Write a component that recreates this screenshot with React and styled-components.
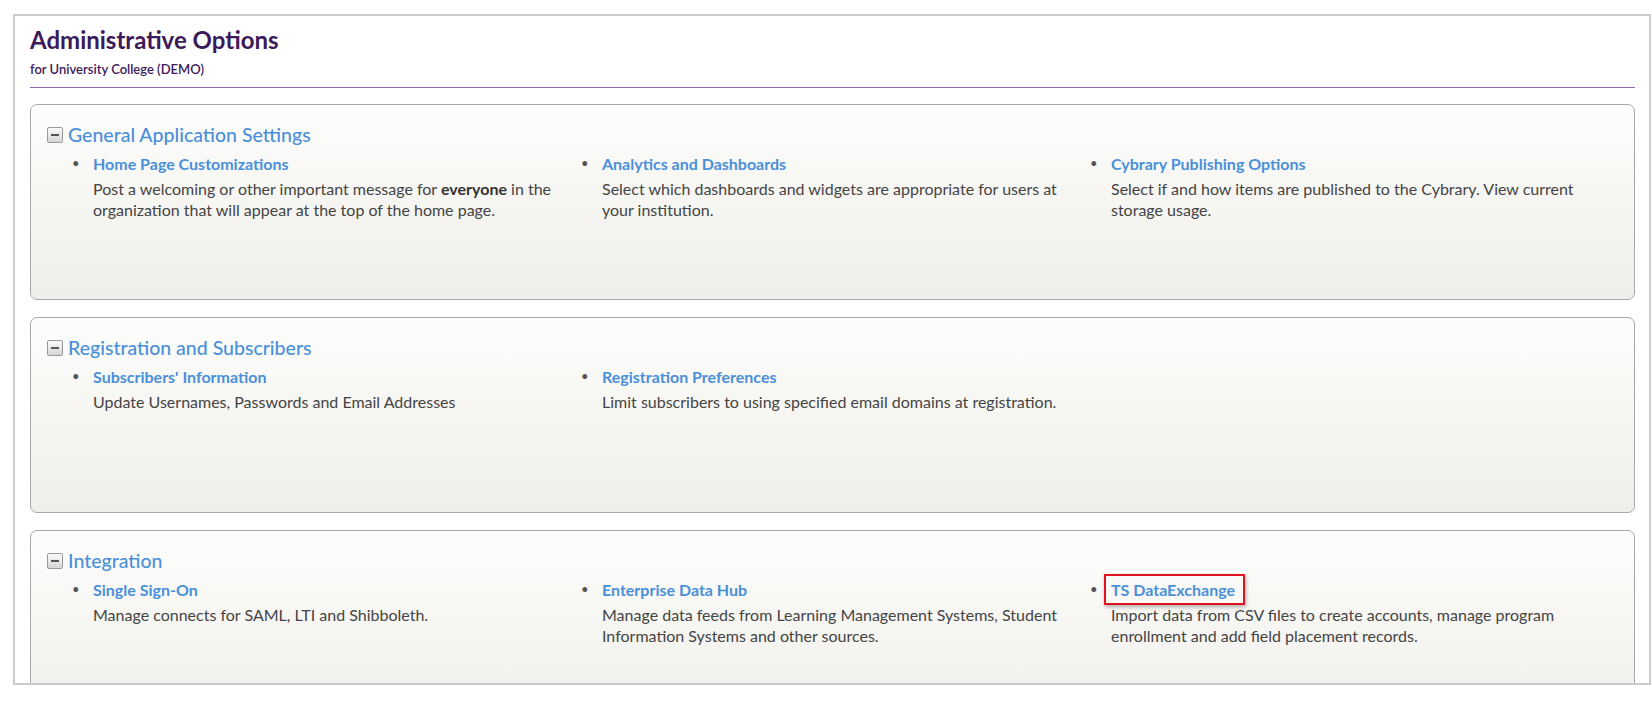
import React from "react";
import styled, { createGlobalStyle } from "styled-components";

const Global = createGlobalStyle`
  body { margin: 0; background: #fff; font-family: Lato, "Open Sans", sans-serif; }
`;
const Frame = styled.div`
  margin: 14px 0 0 13px; width: 1638px; height: 671px; overflow: hidden;
  border: 2px solid #cbcbcb; padding: 0 14px 0 15px; box-sizing: border-box;
`;
const Title = styled.h1`
  margin: 8px 0 0; font-size: 24px; font-weight: 700; color: #3d1a5b; line-height: 32px;
`;
const Sub = styled.div`
  font-size: 13px; color: #3d1a5b; margin-top: 5px; line-height: 17px; font-weight: 600;
`;
const Rule = styled.div`
  height: 1px; background: #8c6aa8; margin: 9px 0 16px;
`;
const Panel = styled.section`
  height: 196px; box-sizing: border-box; border: 1px solid #a9a9a9; border-radius: 7px;
  background: linear-gradient(#fdfdfc, #efeee8); padding: 18px 16px 0 16px; margin-bottom: 17px;
`;
const Head = styled.div`
  display: flex; align-items: center; gap: 5px; font-size: 19.5px; color: #4a90d9; font-weight: 500; line-height: 24px;
`;
const Toggle = styled.span`
  width: 16px; height: 16px; border: 1px solid #999; border-radius: 2px;
  background: linear-gradient(#fafafa, #d6d6d6); position: relative; box-sizing: border-box;
  &::after { content: ""; position: absolute; left: 3px; right: 3px; top: 6px; height: 2px; background: #555; }
`;
const Grid = styled.div`
  display: grid; grid-template-columns: 509px 509px 509px; margin-top: 6px;
`;
const Item = styled.div`
  display: flex; padding-left: 25px;
`;
const Bullet = styled.span`
  width: 21px; flex: none; font-size: 13px; color: #555; line-height: 21px;
`;
const Body = styled.div`
  width: 470px;
`;
const Link = styled.a`
  display: inline-block; font-size: 16px; font-weight: 700; color: #4a90d9; line-height: 21px;
  ${p => p.$hl && "border: 2px solid #e0141e; padding: 3px 8px 3px 5px; margin: -5px 0 -5px -7px; box-shadow: 1px 2px 4px rgba(0,0,0,0.3);"}
`;
const Desc = styled.div`
  font-size: 16px; color: #444; line-height: 21px; margin-top: 4px;
  b { font-weight: 700; color: #333; }
`;

const data = [
  ["General Application Settings", [
    ["Home Page Customizations", <>Post a welcoming or other important message for <b>everyone</b> in the organization that will appear at the top of the home page.</>],
    ["Analytics and Dashboards", "Select which dashboards and widgets are appropriate for users at your institution."],
    ["Cybrary Publishing Options", "Select if and how items are published to the Cybrary. View current storage usage."],
  ]],
  ["Registration and Subscribers", [
    ["Subscribers' Information", "Update Usernames, Passwords and Email Addresses"],
    ["Registration Preferences", "Limit subscribers to using specified email domains at registration."],
  ]],
  ["Integration", [
    ["Single Sign-On", "Manage connects for SAML, LTI and Shibboleth."],
    ["Enterprise Data Hub", "Manage data feeds from Learning Management Systems, Student Information Systems and other sources."],
    ["TS DataExchange", "Import data from CSV files to create accounts, manage program enrollment and add field placement records.", true],
  ]],
];

export default function App() {
  return (
    <>
      <Global />
      <Frame>
        <Title>Administrative Options</Title>
        <Sub>for University College (DEMO)</Sub>
        <Rule />
        {data.map(([h, items]) => (
          <Panel key={h}>
            <Head><Toggle />{h}</Head>
            <Grid>
              {items.map(([l, d, hl]) => (
                <Item key={l}>
                  <Bullet>•</Bullet>
                  <Body>
                    <Link $hl={hl}>{l}</Link>
                    <Desc>{d}</Desc>
                  </Body>
                </Item>
              ))}
            </Grid>
          </Panel>
        ))}
      </Frame>
    </>
  );
}
